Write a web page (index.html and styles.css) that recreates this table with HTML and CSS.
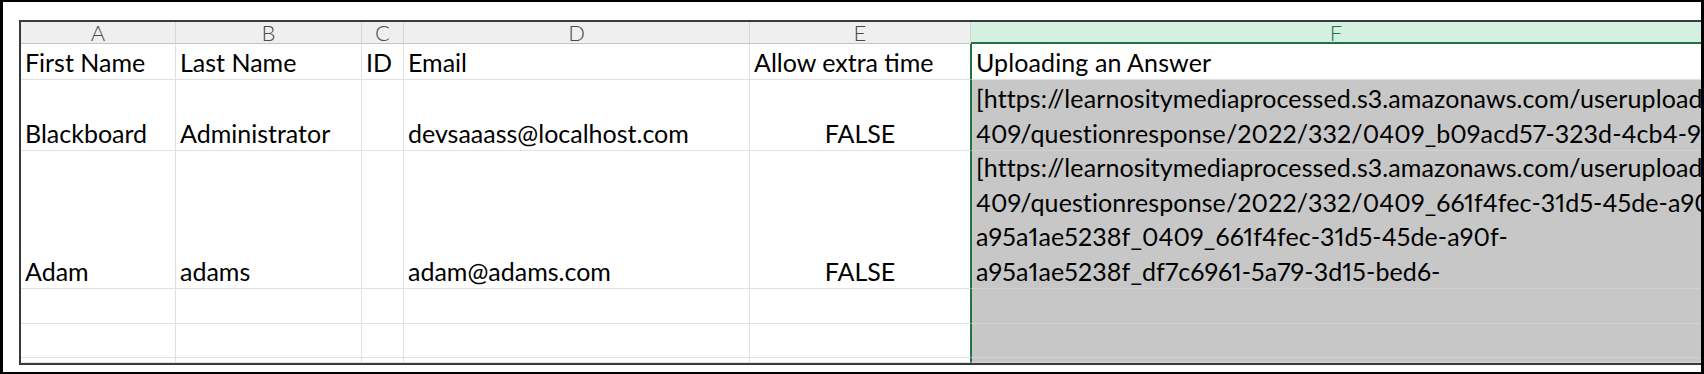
FILE: index.html
```html
<!DOCTYPE html>
<html lang="en">
<head>
<meta charset="utf-8">
<title>Sheet</title>
<link rel="stylesheet" href="styles.css">
</head>
<body>
<div class="screen">
  <div class="sheet">
    <div class="hd">A</div>
    <div class="hd">B</div>
    <div class="hd">C</div>
    <div class="hd">D</div>
    <div class="hd">E</div>
    <div class="hd hd-sel">F</div>

    <div class="c">First Name</div>
    <div class="c">Last Name</div>
    <div class="c">ID</div>
    <div class="c">Email</div>
    <div class="c e">Allow extra time</div>
    <div class="c f f1">Uploading an Answer</div>

    <div class="c">Blackboard</div>
    <div class="c">Administrator</div>
    <div class="c"></div>
    <div class="c">devsaaass@localhost.com</div>
    <div class="c e ctr">FALSE</div>
    <div class="c f"><div>[https://learnositymediaprocessed.s3.amazonaws.com/userupload/<br>409/questionresponse/2022/332/0409_b09acd57-323d-4cb4-934a-</div></div>

    <div class="c">Adam</div>
    <div class="c">adams</div>
    <div class="c"></div>
    <div class="c">adam@adams.com</div>
    <div class="c e ctr">FALSE</div>
    <div class="c f"><div>[https://learnositymediaprocessed.s3.amazonaws.com/userupload/<br>409/questionresponse/2022/332/0409_661f4fec-31d5-45de-a90f-<br>a95a1ae5238f_0409_661f4fec-31d5-45de-a90f-<br>a95a1ae5238f_df7c6961-5a79-3d15-bed6-</div></div>

    <div class="c"></div>
    <div class="c"></div>
    <div class="c"></div>
    <div class="c"></div>
    <div class="c e"></div>
    <div class="c f"></div>

    <div class="c"></div>
    <div class="c"></div>
    <div class="c"></div>
    <div class="c"></div>
    <div class="c e"></div>
    <div class="c f"></div>

    <div class="c"></div>
    <div class="c"></div>
    <div class="c"></div>
    <div class="c"></div>
    <div class="c e"></div>
    <div class="c f"></div>
  </div>
</div>
</body>
</html>
```

FILE: styles.css
```css
* { box-sizing: border-box; }
html, body { margin: 0; padding: 0; background: #fff; }
body { width: 1704px; height: 374px; overflow: hidden; }

.screen {
  width: 1704px;
  height: 374px;
  border-style: solid;
  border-color: #000;
  border-width: 2px 3px 2px 3px;
  padding: 18px 0 7px 16px;
  background: #fff;
}

.sheet {
  height: 345px;
  border-top: 2px solid #3a3a3a;
  border-left: 2px solid #3a3a3a;
  border-bottom: 2px solid #3a3a3a;
  display: grid;
  grid-template-columns: 155px 186px 42px 346px 221px minmax(0, 1fr);
  grid-template-rows: 22px 36px 71px 138px 35px 34px 5px;
  overflow: hidden;
  font-family: Lato, "Open Sans", sans-serif;
  color: #000;
}

.hd {
  background: #efefef;
  color: #4a4a4a;
  font-weight: 300;
  font-size: 22px;
  line-height: 22px;
  text-align: center;
  border-right: 1px solid #d6d6d6;
  border-bottom: 1px solid #c4c4c4;
}

.hd-sel {
  background: #d3f0e0;
  color: #217346;
  border-right: none;
  border-bottom: 2px solid #217346;
}

.c {
  min-width: 0;
  display: flex;
  align-items: flex-end;
  padding: 0 4px;
  font-size: 25px;
  line-height: 34.5px;
  white-space: nowrap;
  overflow: hidden;
  border-right: 1px solid #e1e1e1;
  border-bottom: 1px solid #e1e1e1;
}

.ctr { justify-content: center; }

.e { border-right-color: #217346; }

.f {
  background: #c7c7c7;
  border-left: 1px solid #217346;
  border-right: none;
  border-bottom-color: #d2d2d2;
  font-variant-numeric: proportional-nums;
  letter-spacing: 0.1px;
}

.f1 {
  background: #fff;
  border-bottom-color: #e1e1e1;
}
```
